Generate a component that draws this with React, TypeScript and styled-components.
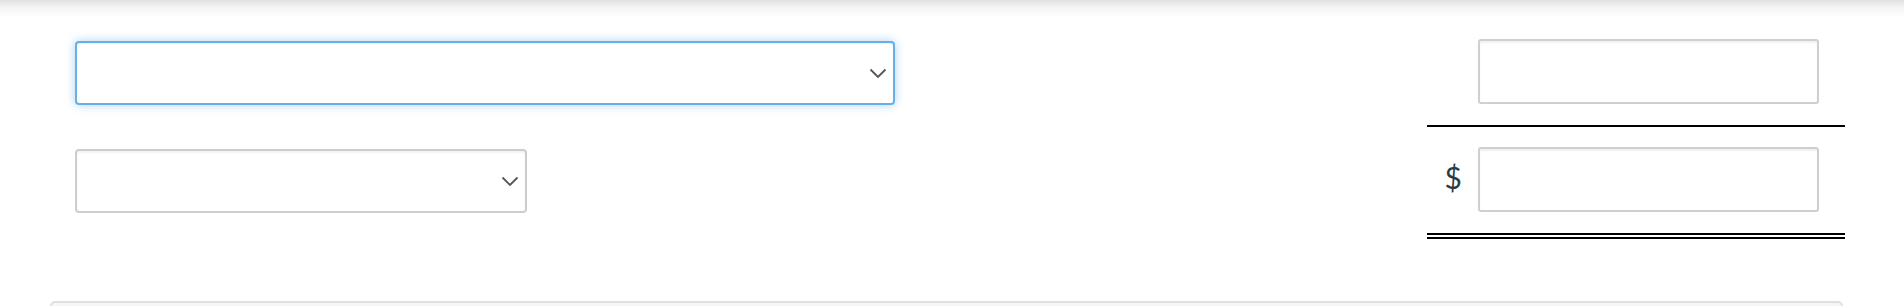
import React from 'react';
import styled, { createGlobalStyle, css } from 'styled-components';

const GlobalStyle = createGlobalStyle`
  body {
    margin: 0;
    background: #fff;
    font-family: Lato, 'Open Sans', sans-serif;
    color: #2d3b45;
  }
`;

const Page = styled.div`
  height: 306px;
  overflow: hidden;
  background: linear-gradient(to bottom, rgba(0, 0, 0, 0.12) 0px, rgba(0, 0, 0, 0.04) 8px, rgba(0, 0, 0, 0) 18px) #fff;
`;

const Content = styled.div`
  display: flex;
  justify-content: space-between;
  align-items: flex-start;
  padding: 19px 59px 0 75px;
`;

const LeftCol = styled.div`
  display: flex;
  flex-direction: column;
  gap: 44px;
  padding-top: 22px;
`;

const SelectBox = styled.div<{ $width: number; $focused?: boolean }>`
  box-sizing: border-box;
  width: ${(p) => p.$width}px;
  height: 64px;
  display: flex;
  align-items: center;
  justify-content: flex-end;
  padding-right: 6px;
  background: #fff;
  border-radius: 4px;
  ${(p) =>
    p.$focused
      ? css`
          border: 2px solid #66afe9;
          box-shadow: inset 0 1px 1px rgba(0, 0, 0, 0.075), 0 0 10px rgba(102, 175, 233, 0.55);
        `
      : css`
          border: 2px solid #cdcdcd;
          box-shadow: inset 0 2px 2px rgba(0, 0, 0, 0.05);
        `}
`;

const RightCol = styled.div`
  width: 418px;
  display: flex;
  flex-direction: column;
`;

const TotalRow = styled.div<{ $double?: boolean }>`
  display: flex;
  align-items: center;
  justify-content: flex-end;
  gap: 16px;
  padding: 20px 26px 21px 0;
  border-bottom: ${(p) => (p.$double ? '6px double #000' : '2px solid #000')};
`;

const Dollar = styled.span`
  font-size: 30px;
  line-height: 1;
  margin-bottom: 5px;
  color: #2d3b45;
`;

const AmountInput = styled.input`
  box-sizing: border-box;
  width: 341px;
  height: 65px;
  border: 2px solid #cfcfcf;
  border-radius: 3px;
  box-shadow: inset 0 2px 2px rgba(0, 0, 0, 0.06);
  background: #fff;
  font: inherit;
  font-size: 18px;
  padding: 0 12px;
  outline: none;
`;

const Panel = styled.div`
  margin: 62px 61px 0 50px;
  height: 40px;
  background: #f5f5f5;
  border: 2px solid #e0e0e0;
  border-radius: 5px;
`;

function Chevron() {
  return (
    <svg width="18" height="11" viewBox="0 0 18 11" fill="none">
      <path d="M1.5 1.5 L9 9 L16.5 1.5" stroke="#555" strokeWidth="1.8" />
    </svg>
  );
}

export default function App() {
  return (
    <Page>
      <GlobalStyle />
      <Content>
        <LeftCol>
          <SelectBox $width={820} $focused>
            <Chevron />
          </SelectBox>
          <SelectBox $width={452}>
            <Chevron />
          </SelectBox>
        </LeftCol>
        <RightCol>
          <TotalRow>
            <AmountInput aria-label="amount" />
          </TotalRow>
          <TotalRow $double>
            <Dollar>$</Dollar>
            <AmountInput aria-label="total" />
          </TotalRow>
        </RightCol>
      </Content>
      <Panel />
    </Page>
  );
}
